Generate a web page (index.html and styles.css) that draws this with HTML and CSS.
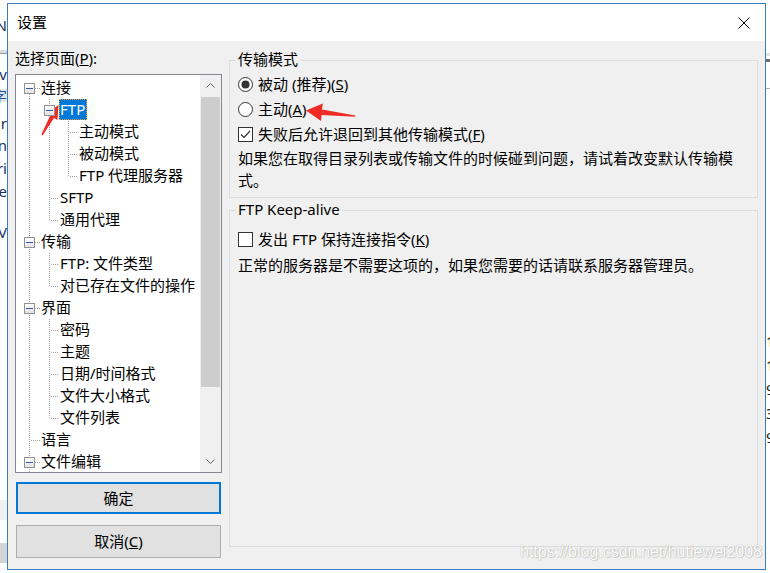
FILE: index.html
```html
<!DOCTYPE html>
<html lang="zh-CN">
<head>
<meta charset="utf-8">
<title>设置</title>
<link rel="stylesheet" href="styles.css">
</head>
<body>
<div class="desk">
  <div class="strip strip-l">
    <div class="sp sp18"></div>
    <div class="ln"><span>N</span></div>
    <div class="sp sp18"></div>
    <div class="bar bar-a"></div>
    <div class="bar bar-b"></div>
    <div class="sp sp13"></div>
    <div class="ln"><span>iv</span></div>
    <div class="sp sp8"></div>
    <div class="ln ln-hl"><span>字</span></div>
    <div class="sp sp14"></div>
    <div class="ln"><span>ur</span></div>
    <div class="sp sp8"></div>
    <div class="ln"><span>n</span></div>
    <div class="sp sp9"></div>
    <div class="ln"><span>ri</span></div>
    <div class="sp sp9"></div>
    <div class="ln"><span>re</span></div>
    <div class="sp sp27"></div>
    <div class="ln"><span>V</span></div>
    <div class="sp sp261"></div>
    <div class="blk blk-grey"></div>
    <div class="blk blk-white"></div>
    <div class="blk blk-dark"></div>
  </div>
  <div class="strip strip-r">
    <div class="sp sp53"></div>
    <div class="bar rbar-a"></div>
    <div class="sp sp3"></div>
    <div class="bar rbar-b"></div>
    <div class="sp sp26"></div>
    <div class="bar rbar-c"></div>
    <div class="sp sp240"></div>
    <div class="dg">1</div>
    <div class="dg">1</div>
    <div class="dg">9</div>
    <div class="dg">3</div>
    <div class="dg">9</div>
  </div>
</div>

<div class="dialog">
  <div class="titlebar">
    <span class="title">设置</span>
    <svg class="close" width="12" height="12" viewBox="0 0 12 12"><path d="M0.5 0.5L11.5 11.5M11.5 0.5L0.5 11.5" stroke="#000" stroke-width="1" fill="none"/></svg>
  </div>
  <div class="body">
    <div class="left">
      <div class="pagelbl">选择页面(<u>P</u>):</div>
      <div class="tree">
        <div class="items">
          <div class="row"><span class="c c0 vb h"><i class="bx"></i></span><span class="t">连接</span></div>
          <div class="row"><span class="c c0 v"></span><span class="c v h"><i class="bx"></i></span><span class="t sel">FTP</span></div>
          <div class="row"><span class="c c0 v"></span><span class="c v"></span><span class="c v h"></span><span class="t">主动模式</span></div>
          <div class="row"><span class="c c0 v"></span><span class="c v"></span><span class="c v h"></span><span class="t">被动模式</span></div>
          <div class="row"><span class="c c0 v"></span><span class="c v"></span><span class="c vt h"></span><span class="t">FTP 代理服务器</span></div>
          <div class="row"><span class="c c0 v"></span><span class="c v h"></span><span class="t">SFTP</span></div>
          <div class="row"><span class="c c0 v"></span><span class="c vt h"></span><span class="t">通用代理</span></div>
          <div class="row"><span class="c c0 v h"><i class="bx"></i></span><span class="t">传输</span></div>
          <div class="row"><span class="c c0 v"></span><span class="c v h"></span><span class="t">FTP: 文件类型</span></div>
          <div class="row"><span class="c c0 v"></span><span class="c vt h"></span><span class="t">对已存在文件的操作</span></div>
          <div class="row"><span class="c c0 v h"><i class="bx"></i></span><span class="t">界面</span></div>
          <div class="row"><span class="c c0 v"></span><span class="c v h"></span><span class="t">密码</span></div>
          <div class="row"><span class="c c0 v"></span><span class="c v h"></span><span class="t">主题</span></div>
          <div class="row"><span class="c c0 v"></span><span class="c v h"></span><span class="t">日期/时间格式</span></div>
          <div class="row"><span class="c c0 v"></span><span class="c v h"></span><span class="t">文件大小格式</span></div>
          <div class="row"><span class="c c0 v"></span><span class="c vt h"></span><span class="t">文件列表</span></div>
          <div class="row"><span class="c c0 v h"></span><span class="t">语言</span></div>
          <div class="row"><span class="c c0 v h"><i class="bx"></i></span><span class="t">文件编辑</span></div>
        </div>
        <div class="vscroll">
          <div class="sarrow"><svg width="9" height="5" viewBox="0 0 9 5"><path d="M0.5 4.5L4.5 0.5L8.5 4.5" stroke="#606060" fill="none"/></svg></div>
          <div class="thumb"></div>
          <div class="sfill"></div>
          <div class="sarrow"><svg width="9" height="5" viewBox="0 0 9 5"><path d="M0.5 0.5L4.5 4.5L8.5 0.5" stroke="#606060" fill="none"/></svg></div>
        </div>
      </div>
      <button class="btn btn-ok">确定</button>
      <button class="btn btn-cancel">取消(<u>C</u>)</button>
    </div>

    <div class="right">
      <fieldset class="grp grp1">
        <legend>传输模式</legend>
        <div class="gin gin1">
          <div class="opt">
            <svg width="15" height="15" viewBox="0 0 15 15"><circle cx="7.5" cy="7.5" r="7" fill="#fff" stroke="#333"/><circle cx="7.5" cy="7.5" r="4" fill="#333"/></svg>
            <span>被动 (推荐)(<u>S</u>)</span>
          </div>
          <div class="opt">
            <svg width="15" height="15" viewBox="0 0 15 15"><circle cx="7.5" cy="7.5" r="7" fill="#fff" stroke="#333"/></svg>
            <span>主动(<u>A</u>)</span>
          </div>
          <div class="opt">
            <svg width="15" height="15" viewBox="0 0 15 15"><rect x="0.5" y="0.5" width="14" height="14" fill="#fff" stroke="#333"/><path d="M3 7.5L6 10.5L12 4" fill="none" stroke="#333" stroke-width="1.2"/></svg>
            <span>失败后允许退回到其他传输模式(<u>F</u>)</span>
          </div>
          <div class="desc">如果您在取得目录列表或传输文件的时候碰到问题，请试着改变默认传输模式。</div>
        </div>
      </fieldset>
      <fieldset class="grp grp2">
        <legend>FTP Keep-alive</legend>
        <div class="gin gin2">
          <div class="opt">
            <svg width="15" height="15" viewBox="0 0 15 15"><rect x="0.5" y="0.5" width="14" height="14" fill="#fff" stroke="#333"/></svg>
            <span>发出 FTP 保持连接指令(<u>K</u>)</span>
          </div>
          <div class="desc desc2">正常的服务器是不需要这项的，如果您需要的话请联系服务器管理员。</div>
        </div>
      </fieldset>
    </div>
  </div>
</div>

<svg class="marks" width="770" height="573" viewBox="0 0 770 573">
  <polygon points="58.5,105 57.5,120 54,118 42.6,135.4 41.4,134.6 50.2,115.6 46.5,114" fill="#ee2b24"/>
  <polygon points="306,110.5 322.8,103.5 322,109.6 355.4,115.4 355.2,116.8 321.6,114.9 321,121" fill="#ee2b24"/>
</svg>

<div class="watermark">https://blog.csdn.net/hutiewei2008</div>
</body>
</html>
```

FILE: styles.css
```css
* { box-sizing: border-box; }
html, body { margin: 0; padding: 0; }
body {
  width: 770px;
  height: 573px;
  overflow: hidden;
  position: relative;
  background: #fff;
  color: #000;
  font-family: "Noto Sans", "Noto Sans CJK SC", sans-serif;
  font-size: 15px;
}

/* background application (behind the dialog) */
.desk { display: flex; justify-content: space-between; height: 573px; }
.strip { display: flex; flex-direction: column; overflow: hidden; }
.strip-l { width: 7px; }
.strip-r { width: 4px; }
.sp { flex: none; }
.sp3 { height: 3px; }
.sp8 { height: 8px; }
.sp9 { height: 9px; }
.sp13 { height: 13px; }
.sp14 { height: 14px; }
.sp18 { height: 18px; }
.sp26 { height: 26px; }
.sp27 { height: 27px; }
.sp53 { height: 53px; }
.sp240 { height: 240px; }
.sp261 { height: 261px; }
.bar { flex: none; }
.bar-a { height: 3px; background: #dadada; }
.bar-b { height: 1px; background: #9a9a9a; }
.rbar-a { height: 3px; background: #e4e4e4; }
.rbar-b { height: 3px; background: #6e6e6e; }
.rbar-c { height: 1px; background: #b0b0b0; }
.ln {
  flex: none;
  height: 14px;
  line-height: 14px;
  display: flex;
  justify-content: flex-end;
  color: #1c2f5c;
  white-space: nowrap;
}
.ln-hl { height: 13px; background: #e5e5e5; color: #2050a0; }
.blk { flex: none; }
.blk-grey { height: 20px; background: #f0f0f0; }
.blk-white { height: 23px; background: #fff; }
.blk-dark { height: 20px; background: #d4d4d4; }
.dg { flex: none; height: 24px; line-height: 24px; color: #222; }

/* dialog window */
.dialog {
  position: absolute;
  left: 7px;
  top: 3px;
  width: 759px;
  height: 567px;
  border: 1px solid #3a7ebf;
  background: #f0f0f0;
  display: flex;
  flex-direction: column;
}
.titlebar {
  height: 37px;
  flex: none;
  background: #fff;
  display: flex;
  align-items: center;
  justify-content: space-between;
  padding: 0 15px 0 9px;
}
.title { line-height: 20px; margin-bottom: 2px; }
.close { display: block; }

.body {
  flex: 1;
  min-height: 0;
  display: flex;
  gap: 7px;
  padding: 0 7px;
}

/* left column */
.left {
  width: 207px;
  flex: none;
  display: flex;
  flex-direction: column;
  padding-top: 7px;
}
.pagelbl { height: 20px; line-height: 20px; }
.tree {
  margin-top: 6px;
  height: 399px;
  border: 1px solid #828790;
  background: #fff;
  display: flex;
  overflow: hidden;
}
.items { flex: 1; min-width: 0; padding: 2px 0 0 4px; overflow: hidden; }
.row { display: flex; align-items: center; height: 22px; white-space: nowrap; }
.c { position: relative; flex: none; width: 19px; height: 22px; }
.c0 { width: 20px; }
.c.v::before, .c.vt::before, .c.vb::before {
  content: "";
  position: absolute;
  left: 9px;
  width: 1px;
  top: 0;
  bottom: 0;
  background: linear-gradient(#a0a0a0 50%, transparent 50%) 0 0 / 1px 2px;
}
.c.vt::before { bottom: 11px; }
.c.vb::before { top: 11px; }
.c.h::after {
  content: "";
  position: absolute;
  left: 10px;
  right: 0;
  top: 11px;
  height: 1px;
  background: linear-gradient(90deg, transparent 50%, #a0a0a0 50%) 0 0 / 2px 1px;
}
.bx {
  position: absolute;
  left: 4px;
  top: 6px;
  width: 11px;
  height: 11px;
  border: 1px solid #919191;
  background: linear-gradient(#ffffff, #e2e2e2);
  z-index: 1;
}
.bx::after {
  content: "";
  position: absolute;
  left: 1px;
  top: 4px;
  width: 7px;
  height: 1px;
  background: #2f5aa8;
}
.t { padding: 0 1px; line-height: 20px; height: 20px; margin-bottom: 2px; }
.t.sel {
  background: #0078d7;
  color: #fff;
  height: 21px;
  line-height: 20px;
  padding: 0 2px 0 1px;
  margin-top: -1px;
  margin-bottom: 0;
  outline: 1px dotted #e89a3c;
  outline-offset: -1px;
}

.vscroll {
  width: 21px;
  flex: none;
  background: #f0f0f0;
  display: flex;
  flex-direction: column;
  align-items: center;
}
.sarrow {
  flex: none;
  height: 21px;
  width: 21px;
  display: flex;
  align-items: center;
  justify-content: center;
}
.sarrow svg { display: block; }
.thumb { flex: none; margin-top: 1px; width: 19px; height: 290px; background: #cdcdcd; }
.sfill { flex: 1; }

.btn {
  display: flex;
  align-items: center;
  justify-content: center;
  margin-left: 1px;
  margin-right: 1px;
  padding: 0 0 2px;
  background: #e1e1e1;
  border: 1px solid #adadad;
  font-family: inherit;
  font-size: 15px;
  color: #000;
}
.btn-ok { margin-top: 9px; height: 32px; border: 2px solid #0078d7; }
.btn-cancel { margin-top: 11px; height: 33px; }

/* right column */
.right {
  flex: 1;
  min-width: 0;
  display: flex;
  flex-direction: column;
  padding: 9px 0 22px;
}
.grp {
  margin: 0;
  padding: 0;
  min-width: 0;
  border: 1px solid #dcdcdc;
}
.grp legend {
  margin-left: 6px;
  padding: 0 2px 2px;
  height: 20px;
  line-height: 18px;
}
.grp2 { flex: 1; margin-top: 2px; }
.gin1 { padding: 2px 4px 6px 8px; }
.gin2 { padding: 7px 4px 0 8px; }
.opt {
  display: flex;
  align-items: center;
  gap: 5px;
  height: 25px;
  white-space: nowrap;
}
.opt span { margin-bottom: 2px; }
.opt svg { display: block; flex: none; }
.desc { margin-top: 0; line-height: 22px; }
.desc2 { margin-top: 2px; }

/* annotations */
.marks { position: absolute; left: 0; top: 0; pointer-events: none; }
.watermark {
  position: absolute;
  left: 520px;
  top: 543px;
  font-family: "Liberation Sans", Arial, sans-serif;
  font-size: 16px;
  line-height: 18px;
  color: #ffffff;
  text-shadow: 0 0 1px rgba(0, 0, 0, 0.35), 1px 1px 1px rgba(0, 0, 0, 0.12);
  white-space: nowrap;
}
```
